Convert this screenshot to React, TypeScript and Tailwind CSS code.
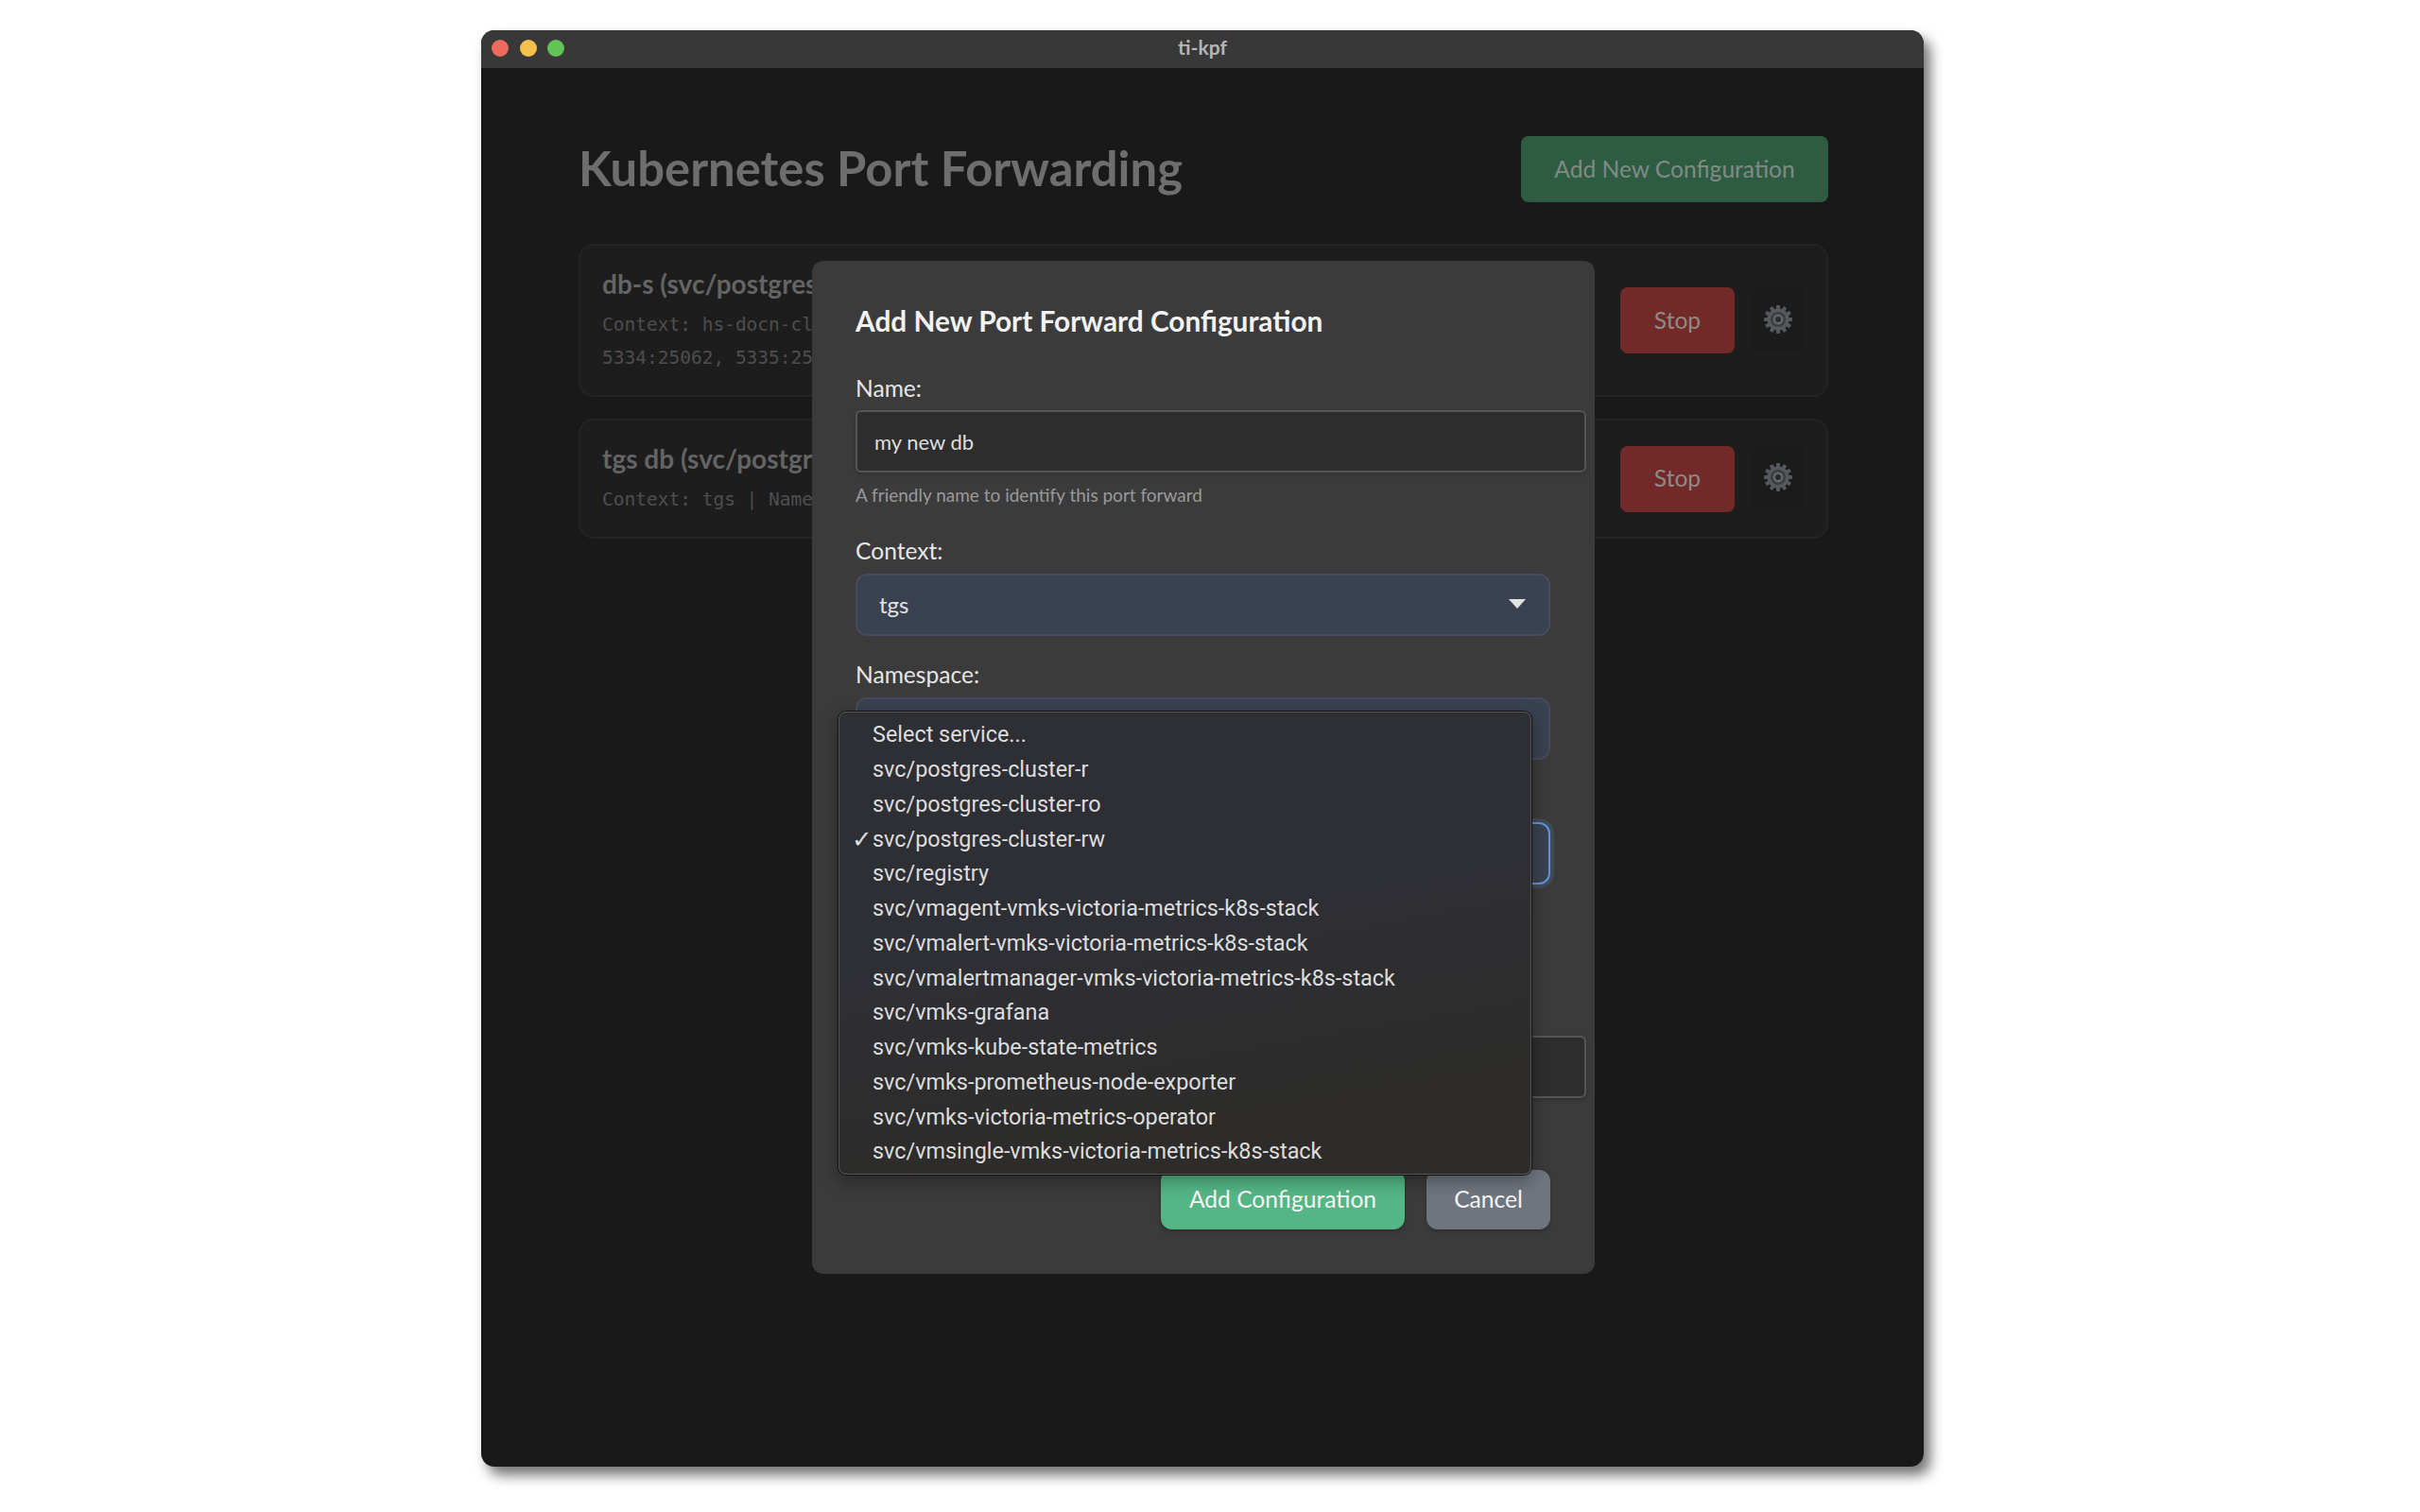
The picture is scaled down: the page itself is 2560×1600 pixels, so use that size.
import React from 'react';

const services = [
  'Select service...',
  'svc/postgres-cluster-r',
  'svc/postgres-cluster-ro',
  'svc/postgres-cluster-rw',
  'svc/registry',
  'svc/vmagent-vmks-victoria-metrics-k8s-stack',
  'svc/vmalert-vmks-victoria-metrics-k8s-stack',
  'svc/vmalertmanager-vmks-victoria-metrics-k8s-stack',
  'svc/vmks-grafana',
  'svc/vmks-kube-state-metrics',
  'svc/vmks-prometheus-node-exporter',
  'svc/vmks-victoria-metrics-operator',
  'svc/vmsingle-vmks-victoria-metrics-k8s-stack',
];

const Gear = () => (
  <svg width="32" height="32" viewBox="0 0 32 32">
    {Array.from({ length: 12 }).map((_, i) => (
      <rect key={i} x="14" y="1" width="4" height="6" rx="1" fill="#55585c" transform={`rotate(${i * 30} 16 16)`} />
    ))}
    <circle cx="16" cy="16" r="11.5" fill="#55585c" />
    <circle cx="16" cy="16" r="8" fill="#3b3d40" />
    <circle cx="16" cy="16" r="5.5" fill="#63666b" />
    <circle cx="16" cy="16" r="3" fill="#2a2b2d" />
  </svg>
);

const ConfigCard = ({ title, lines, pad }: { title: string; lines: string[]; pad: string }) => (
  <div className={`flex items-center justify-between rounded-2xl border-2 border-[#242424] bg-[#1d1d1d] pl-[23px] pr-[23px] ${pad}`}>
    <div className="min-w-0">
      <div className="text-[28px] leading-[34px] font-bold text-[#646464]">{title}</div>
      <div className="mt-[9px] font-['DejaVu_Sans_Mono',monospace] text-[19.5px] leading-[35px] text-[#4e4e4e]">
        {lines.map((line) => (
          <div key={line}>{line}</div>
        ))}
      </div>
    </div>
    <div className="flex items-center gap-[18px]">
      <button className="h-[70px] w-[121px] rounded-lg bg-[#722a28] text-[24.6px] text-[#8f8a89]">Stop</button>
      <div className="mb-[3px] flex h-[66px] w-[56px] items-center justify-center rounded-lg bg-[#1b1b1b]">
        <Gear />
      </div>
    </div>
  </div>
);

const Label = ({ children, tight }: { children: React.ReactNode; tight?: boolean }) => (
  <div className={`text-[24.6px] leading-[30px] text-[#e6e6e6] ${tight ? 'mb-[8px]' : 'mb-[9px]'}`}>{children}</div>
);

const Select = ({ value, focused }: { value: string; focused?: boolean }) => (
  <div
    className={`relative flex h-[66px] w-[735px] items-center rounded-xl border-2 bg-[#3a4150] pl-[23px] text-[24px] text-[#e4e4e4] ${
      focused ? 'border-[#5f93e0] shadow-[0_0_0_4px_rgba(95,147,224,0.18)]' : 'border-[#454c5c]'
    }`}
  >
    {value}
    <svg className="absolute right-[24px] top-[25px]" width="18" height="10" viewBox="0 0 18 10">
      <polygon points="0,0 18,0 9,10" fill="#e2e2e2" />
    </svg>
  </div>
);

const Input = ({ value }: { value: string }) => (
  <div className="flex h-[66px] w-[773px] items-center rounded-md border-2 border-[#555555] bg-[#2d2d2d] pl-[18px] text-[22px] text-[#dedede] shadow-[0_2px_4px_rgba(0,0,0,0.2)]">
    {value}
  </div>
);

export default function App() {
  return (
    <div className="min-h-screen bg-white pl-[509px] pt-[32px] font-['Lato',sans-serif]">
      <div className="relative flex h-[1520px] w-[1526px] flex-col overflow-visible rounded-[14px] bg-[#191919] shadow-[7px_9px_14px_rgba(0,0,0,0.55)]">
        <div className="relative flex h-[40px] shrink-0 items-center justify-center rounded-t-[14px] bg-[#383838] pb-[5px] text-[21px] font-bold text-[#b5b5b5]">
          <div className="absolute left-[11px] top-[10px] flex gap-[11.5px]">
            <span className="h-[18px] w-[18px] rounded-full bg-[#ec6a5e]" />
            <span className="h-[18px] w-[18px] rounded-full bg-[#f4bf4f]" />
            <span className="h-[18px] w-[18px] rounded-full bg-[#61c454]" />
          </div>
          ti-kpf
        </div>

        <div className="flex flex-col pl-[103px] pr-[101px] pt-[72px]">
          <div className="mb-[44px] flex h-[70px] items-center justify-between">
            <h1 className="pb-[2px] text-[50.8px] font-bold text-[#6e6e6e]">Kubernetes Port Forwarding</h1>
            <button className="h-[70px] w-[325px] rounded-lg bg-[#2d5c42] text-[24.6px] text-[#828a85]">Add New Configuration</button>
          </div>
          <div className="flex flex-col gap-[23px]">
            <ConfigCard
              pad="h-[162px]"
              title="db-s (svc/postgres-cluster-rw)"
              lines={['Context: hs-docn-cluster | Namespace: default', '5334:25062, 5335:25063']}
            />
            <ConfigCard pad="h-[127px]" title="tgs db (svc/postgres-cluster-rw)" lines={['Context: tgs | Namespace: default']} />
          </div>
        </div>

        {/* modal */}
        <div className="absolute left-[350px] top-[244px] h-[1072px] w-[828px] rounded-xl bg-[#3b3b3b] pl-[46px] pr-[47px] pt-[46px]">
          <h2 className="mb-[38px] text-[29.8px] leading-[36px] font-bold text-[#f2f2f2]">Add New Port Forward Configuration</h2>
          <Label tight>Name:</Label>
          <Input value="my new db" />
          <div className="mt-[9px] mb-[29px] text-[19px] leading-[30px] text-[#9a9a9a]">A friendly name to identify this port forward</div>
          <Label>Context:</Label>
          <Select value="tgs" />
          <div className="h-[26px]" />
          <Label>Namespace:</Label>
          <Select value="default" />
          <div className="h-[27px]" />
          <Label>Service:</Label>
          <Select value="svc/postgres-cluster-rw" focused />
          <div className="h-[122px]" />
          <Label tight>Ports:</Label>
          <Input value="5432:5432" />
          <div className="mt-[76px] flex justify-end gap-[23px]">
            <button className="h-[63px] w-[258px] rounded-xl bg-[#54b585] text-[24.6px] text-[#f4f4f4] shadow-[0_2px_4px_rgba(0,0,0,0.25)]">Add Configuration</button>
            <button className="h-[63px] w-[131px] rounded-xl bg-[#6e757e] text-[24.6px] text-[#f4f4f4] shadow-[0_2px_4px_rgba(0,0,0,0.25)]">Cancel</button>
          </div>

          {/* open native select menu */}
          <div className="absolute left-[28px] top-[477px] h-[490px] w-[733px] rounded-lg border border-[#57575a] bg-[linear-gradient(170deg,#2e2f35_0%,#2e2f35_45%,#2d2c2a_82%)] py-[5.5px] font-['Roboto',sans-serif] text-[23.4px] text-[#dddddd] shadow-[0_0_0_1px_#111,0_6px_18px_rgba(0,0,0,0.35)]">
            {services.map((name) => (
              <div key={name} className="flex h-[36.75px] items-center">
                <span className="w-[35px] text-right text-[26px]">{name === 'svc/postgres-cluster-rw' ? '✓' : ''}</span>
                <span>{name}</span>
              </div>
            ))}
          </div>
        </div>
      </div>
    </div>
  );
}
